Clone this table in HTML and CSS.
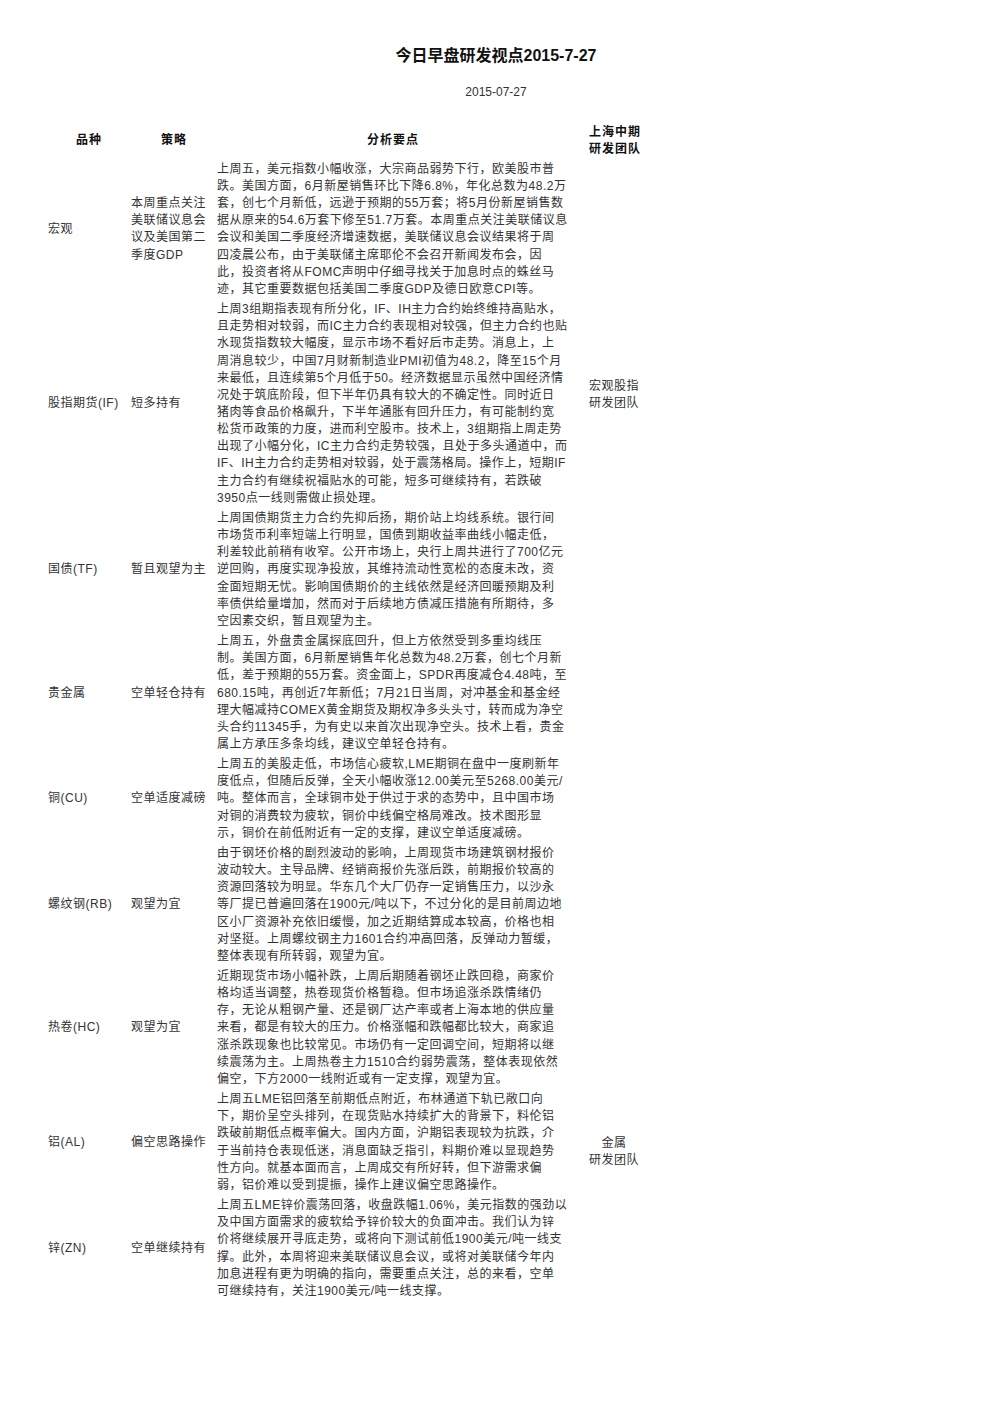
FILE: index.html
```html
<!DOCTYPE html>
<html lang="zh-CN">
<head>
<meta charset="utf-8">
<title>今日早盘研发视点2015-7-27</title>
<link rel="stylesheet" href="styles.css">
</head>
<body>
<h1 class="title">今日早盘研发视点2015-7-27</h1>
<p class="date">2015-07-27</p>
<table class="report">
  <colgroup>
    <col class="c-kind">
    <col class="c-strategy">
    <col class="c-analysis">
    <col class="c-team">
  </colgroup>
  <thead>
    <tr>
      <th>品种</th>
      <th>策略</th>
      <th>分析要点</th>
      <th class="team-head">上海中期<br>研发团队</th>
    </tr>
  </thead>
  <tbody>
    <tr>
      <td class="kind">宏观</td>
      <td class="strategy">本周重点关注<br>美联储议息会<br>议及美国第二<br>季度GDP</td>
      <td class="analysis">上周五，美元指数小幅收涨，大宗商品弱势下行，欧美股市普<br>跌。美国方面，6月新屋销售环比下降6.8%，年化总数为48.2万<br>套，创七个月新低，远逊于预期的55万套；将5月份新屋销售数<br>据从原来的54.6万套下修至51.7万套。本周重点关注美联储议息<br>会议和美国二季度经济增速数据，美联储议息会议结果将于周<br>四凌晨公布，由于美联储主席耶伦不会召开新闻发布会，因<br>此，投资者将从FOMC声明中仔细寻找关于加息时点的蛛丝马<br>迹，其它重要数据包括美国二季度GDP及德日欧意CPI等。</td>
      <td class="team" rowspan="3">宏观股指<br>研发团队</td>
    </tr>
    <tr>
      <td class="kind">股指期货(IF)</td>
      <td class="strategy">短多持有</td>
      <td class="analysis">上周3组期指表现有所分化，IF、IH主力合约始终维持高贴水，<br>且走势相对较弱，而IC主力合约表现相对较强，但主力合约也贴<br>水现货指数较大幅度，显示市场不看好后市走势。消息上，上<br>周消息较少，中国7月财新制造业PMI初值为48.2，降至15个月<br>来最低，且连续第5个月低于50。经济数据显示虽然中国经济情<br>况处于筑底阶段，但下半年仍具有较大的不确定性。同时近日<br>猪肉等食品价格飙升，下半年通胀有回升压力，有可能制约宽<br>松货币政策的力度，进而利空股市。技术上，3组期指上周走势<br>出现了小幅分化，IC主力合约走势较强，且处于多头通道中，而<br>IF、IH主力合约走势相对较弱，处于震荡格局。操作上，短期IF<br>主力合约有继续祝福贴水的可能，短多可继续持有，若跌破<br>3950点一线则需做止损处理。</td>
    </tr>
    <tr>
      <td class="kind">国债(TF)</td>
      <td class="strategy">暂且观望为主</td>
      <td class="analysis">上周国债期货主力合约先抑后扬，期价站上均线系统。银行间<br>市场货币利率短端上行明显，国债到期收益率曲线小幅走低，<br>利差较此前稍有收窄。公开市场上，央行上周共进行了700亿元<br>逆回购，再度实现净投放，其维持流动性宽松的态度未改，资<br>金面短期无忧。影响国债期价的主线依然是经济回暖预期及利<br>率债供给量增加，然而对于后续地方债减压措施有所期待，多<br>空因素交织，暂且观望为主。</td>
    </tr>
    <tr>
      <td class="kind">贵金属</td>
      <td class="strategy">空单轻仓持有</td>
      <td class="analysis">上周五，外盘贵金属探底回升，但上方依然受到多重均线压<br>制。美国方面，6月新屋销售年化总数为48.2万套，创七个月新<br>低，差于预期的55万套。资金面上，SPDR再度减仓4.48吨，至<br>680.15吨，再创近7年新低；7月21日当周，对冲基金和基金经<br>理大幅减持COMEX黄金期货及期权净多头头寸，转而成为净空<br>头合约11345手，为有史以来首次出现净空头。技术上看，贵金<br>属上方承压多条均线，建议空单轻仓持有。</td>
      <td class="team team-metal" rowspan="6">金属<br>研发团队</td>
    </tr>
    <tr>
      <td class="kind">铜(CU)</td>
      <td class="strategy">空单适度减磅</td>
      <td class="analysis">上周五的美股走低，市场信心疲软,LME期铜在盘中一度刷新年<br>度低点，但随后反弹，全天小幅收涨12.00美元至5268.00美元/<br>吨。整体而言，全球铜市处于供过于求的态势中，且中国市场<br>对铜的消费较为疲软，铜价中线偏空格局难改。技术图形显<br>示，铜价在前低附近有一定的支撑，建议空单适度减磅。</td>
    </tr>
    <tr>
      <td class="kind">螺纹钢(RB)</td>
      <td class="strategy">观望为宜</td>
      <td class="analysis">由于钢坯价格的剧烈波动的影响，上周现货市场建筑钢材报价<br>波动较大。主导品牌、经销商报价先涨后跌，前期报价较高的<br>资源回落较为明显。华东几个大厂仍存一定销售压力，以沙永<br>等厂提已普遍回落在1900元/吨以下，不过分化的是目前周边地<br>区小厂资源补充依旧缓慢，加之近期结算成本较高，价格也相<br>对坚挺。上周螺纹钢主力1601合约冲高回落，反弹动力暂缓，<br>整体表现有所转弱，观望为宜。</td>
    </tr>
    <tr>
      <td class="kind">热卷(HC)</td>
      <td class="strategy">观望为宜</td>
      <td class="analysis">近期现货市场小幅补跌，上周后期随着钢坯止跌回稳，商家价<br>格均适当调整，热卷现货价格暂稳。但市场追涨杀跌情绪仍<br>存，无论从粗钢产量、还是钢厂达产率或者上海本地的供应量<br>来看，都是有较大的压力。价格涨幅和跌幅都比较大，商家追<br>涨杀跌现象也比较常见。市场仍有一定回调空间，短期将以继<br>续震荡为主。上周热卷主力1510合约弱势震荡，整体表现依然<br>偏空，下方2000一线附近或有一定支撑，观望为宜。</td>
    </tr>
    <tr>
      <td class="kind">铝(AL)</td>
      <td class="strategy">偏空思路操作</td>
      <td class="analysis">上周五LME铝回落至前期低点附近，布林通道下轨已敞口向<br>下，期价呈空头排列，在现货贴水持续扩大的背景下，料伦铝<br>跌破前期低点概率偏大。国内方面，沪期铝表现较为抗跌，介<br>于当前持仓表现低迷，消息面缺乏指引，料期价难以显现趋势<br>性方向。就基本面而言，上周成交有所好转，但下游需求偏<br>弱，铝价难以受到提振，操作上建议偏空思路操作。</td>
    </tr>
    <tr>
      <td class="kind">锌(ZN)</td>
      <td class="strategy">空单继续持有</td>
      <td class="analysis">上周五LME锌价震荡回落，收盘跌幅1.06%，美元指数的强劲以<br>及中国方面需求的疲软给予锌价较大的负面冲击。我们认为锌<br>价将继续展开寻底走势，或将向下测试前低1900美元/吨一线支<br>撑。此外，本周将迎来美联储议息会议，或将对美联储今年内<br>加息进程有更为明确的指向，需要重点关注，总的来看，空单<br>可继续持有，关注1900美元/吨一线支撑。</td>
    </tr>
  </tbody>
</table>
</body>
</html>
```

FILE: styles.css
```css
body {
  margin: 0;
  background: #ffffff;
  color: #333333;
  font-family: "Liberation Sans", "Noto Sans CJK SC", sans-serif;
}

.title {
  margin: 46px 0 0;
  text-align: center;
  font-size: 16px;
  line-height: 20px;
  font-weight: bold;
  color: #111111;
}

.date {
  margin: 18px 0 0;
  text-align: center;
  font-size: 12px;
  line-height: 16px;
  color: #333333;
}

.report {
  margin: 21px 0 0 46px;
  border-collapse: collapse;
  table-layout: fixed;
  width: 614px;
  font-size: 12px;
  letter-spacing: 0.5px;
}

.c-kind { width: 84px; }
.c-strategy { width: 86px; }
.c-analysis { width: 352px; }
.c-team { width: 92px; }

.report th,
.report td {
  padding: 1.5px 0 1.5px 2px;
  line-height: 17.15px;
  vertical-align: middle;
  text-align: left;
  white-space: nowrap;
}

.report th {
  padding-top: 2.5px;
  text-align: center;
  font-weight: bold;
  letter-spacing: 1px;
  color: #111111;
}

.report td.analysis {
  padding-left: 1px;
}

.report td.strategy {
  padding-left: 1px;
}

.report td.team {
  text-align: center;
  padding-left: 0;
}

.report td.team-metal {
  vertical-align: top;
  padding-top: 503px;
}
```
